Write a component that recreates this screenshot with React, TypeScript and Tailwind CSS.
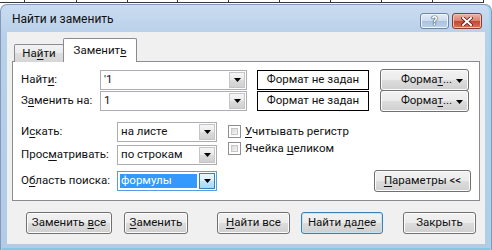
import React from "react";

const U = ({ children }: { children: React.ReactNode }) => (
  <span className="underline underline-offset-[2px] decoration-[1px]">{children}</span>
);

function Arrow({ className = "" }: { className?: string }) {
  return (
    <svg width="7" height="4" viewBox="0 0 7 4" className={className}>
      <path d="M0 0H7L3.5 4Z" fill="#000" />
    </svg>
  );
}

function Combo({
  value,
  w,
  focused = false,
}: {
  value: React.ReactNode;
  w: string;
  focused?: boolean;
}) {
  return (
    <div className={`h-[20px] ${w} flex border ${focused ? "border-[#569de5]" : "border-[#abadb3]"} bg-white`}>
      <div className="flex-1 flex items-stretch p-[2px] min-w-0">
        {focused ? (
          <div className="flex-1 bg-[#3399ff] text-white flex items-center pl-px leading-none">
            <span>{value}</span>
          </div>
        ) : (
          <div className="flex-1 flex items-center pl-[1px] leading-none">
            <span>{value}</span>
          </div>
        )}
      </div>
      <div
        className={`w-[16px] my-px mr-px flex items-center justify-center border ${
          focused
            ? "border-[#3c7fb1] bg-[linear-gradient(#eaf6fd,#d9f0fc_50%,#bee6fd_50%,#a7d9f5)]"
            : "border-[#c5c5c5] bg-[linear-gradient(#f6f6f6,#e9e9e9_50%,#dcdcdc_50%,#d0d0d0)]"
        }`}
      >
        <Arrow />
      </div>
    </div>
  );
}

function Btn({
  children,
  className = "",
  def = false,
}: {
  children: React.ReactNode;
  className?: string;
  def?: boolean;
}) {
  return (
    <div
      className={`h-[22px] flex items-center justify-center rounded-[3px] border leading-none ${
        def
          ? "border-[#3c7fb1] shadow-[inset_0_0_0_1px_#c4e5f6] bg-[linear-gradient(#f2f2f2,#ebebeb_50%,#dddddd_50%,#cfcfcf)]"
          : "border-[#707070] shadow-[inset_0_0_0_1px_#fcfcfc] bg-[linear-gradient(#f2f2f2,#ebebeb_50%,#dddddd_50%,#cfcfcf)]"
      } ${className}`}
    >
      <span className="whitespace-pre">{children}</span>
    </div>
  );
}

function Check({ children }: { children: React.ReactNode }) {
  return (
    <div className="h-[17px] flex items-center">
      <div className="w-[13px] h-[13px] border border-[#8e8f8f] bg-white p-[2px]">
        <div className="w-full h-full border border-[#c6c6c6] bg-[linear-gradient(135deg,#dadada,#f5f5f5)]" />
      </div>
      <span className="ml-[4px] leading-none">{children}</span>
    </div>
  );
}

function FormatBtn() {
  return (
    <div className="ml-[11px] w-[89px] h-[22px] relative flex items-center justify-center rounded-[3px] border border-[#707070] shadow-[inset_0_0_0_1px_#fcfcfc] bg-[linear-gradient(#f2f2f2,#ebebeb_50%,#dddddd_50%,#cfcfcf)] leading-none">
      <span className="ml-[4px]">
        Форма<U>т</U>...
      </span>
      <Arrow className="absolute right-[5px] top-[9px]" />
    </div>
  );
}

export default function App() {
  const cells = [25, 52, 51, 50, 51, 51, 51, 51, 51, 51];
  return (
    <div className="w-[492px] h-[250px] bg-white overflow-hidden text-[11.5px] text-[#111] font-['Roboto',sans-serif]">
      {/* spreadsheet behind */}
      <div className="h-[4px] flex">
        {cells.map((c, i) => (
          <div key={i} style={{ width: c }} className="h-[3px] shrink-0 border-r border-b border-[#3a3a3a]" />
        ))}
      </div>

      {/* window */}
      <div className="h-[246px] rounded-t-[7px] border border-b-0 border-[#7f9aba] bg-[linear-gradient(#cadcf0,#b9d0e9_30px,#b4cbe6)] flex flex-col shadow-[inset_-2px_0_0_#9fd8ee]">
        {/* title bar */}
        <div className="h-[27px] flex items-start">
          <div className="pl-[11px] pt-[8px] leading-none text-[12px] text-[#111]">Найти и заменить</div>
          <div className="flex-1" />
          <div className="mt-[8px] w-[29px] h-[16px] rounded-[3px] border border-[#6f86a2] bg-[linear-gradient(#e4edf7,#cbdaec_50%,#aac2de_50%,#bcd2ea)] shadow-[inset_0_0_0_1px_#eef4fb] flex items-center justify-center">
            <span className="font-bold text-[12px] leading-none text-white [text-shadow:0_0_1px_#33465c,0_0_1px_#33465c,0_0_1px_#33465c]">?</span>
          </div>
          <div className="mt-[8px] ml-[3px] mr-[9px] w-[30px] h-[16px] rounded-[3px] border border-[#8a3b33] bg-[linear-gradient(#eab3a7,#d9826f_50%,#c4452f_50%,#d8735a)] shadow-[inset_0_0_0_1px_#f1c2b6] flex items-center justify-center">
            <svg width="12" height="9" viewBox="0 0 12 9">
              <path d="M2 1L10 8M10 1L2 8" stroke="#5a1d16" strokeWidth="3.6" strokeLinecap="square" />
              <path d="M2 1L10 8M10 1L2 8" stroke="#fff" strokeWidth="2" strokeLinecap="square" />
            </svg>
          </div>
        </div>

        {/* client area */}
        <div className="ml-[6px] mr-[6px] h-[212px] bg-[#f0f0f0] pl-[5px] pr-[5px] pt-[7px]">
          {/* tabs */}
          <div className="flex items-end ml-[2px] h-[23px] -mb-px relative">
            <div className="w-[50px] h-[18px] border border-b-0 border-[#898c95] rounded-t-[2px] bg-[linear-gradient(#f3f3f3,#ebebeb_50%,#dedede_50%,#d6d6d6)] flex items-center justify-center leading-none">
              <span>
                На<U>й</U>ти
              </span>
            </div>
            <div className="w-[74px] h-[24px] -ml-px border border-b-0 border-[#898c95] rounded-t-[2px] bg-white flex items-start justify-center pt-[6px] leading-none relative z-10">
              <span>
                Заменит<U>ь</U>
              </span>
            </div>
          </div>

          {/* panel */}
          <div className="h-[140px] border border-[#898c95] bg-white flex flex-col pl-[8px] pr-[8px] pt-[8px]">
            {/* row 1 */}
            <div className="flex items-center h-[20px]">
              <div className="w-[79px] leading-none">
                Найт<U>и</U>:
              </div>
              <Combo w="w-[147px]" value="'1" />
              <div className="ml-[10px] w-[112px] h-[20px] border border-black bg-white flex items-center justify-center leading-none">
                <span>Формат не задан</span>
              </div>
              <FormatBtn />
            </div>
            {/* row 2 */}
            <div className="flex items-center h-[20px] mt-[1px]">
              <div className="w-[79px] leading-none">
                З<U>а</U>менить на:
              </div>
              <Combo w="w-[147px]" value="1" />
              <div className="ml-[10px] w-[112px] h-[20px] border border-black bg-white flex items-center justify-center leading-none">
                <span>Формат не задан</span>
              </div>
              <FormatBtn />
            </div>

            {/* section 2 */}
            <div className="flex mt-[11px]">
              <div className="flex flex-col">
                <div className="flex items-center h-[20px]">
                  <div className="w-[96px] leading-none">
                    И<U>с</U>кать:
                  </div>
                  <Combo w="w-[100px]" value="на листе" />
                </div>
                <div className="flex items-center h-[20px] mt-[3px]">
                  <div className="w-[96px] leading-none">
                    Прос<U>м</U>атривать:
                  </div>
                  <Combo w="w-[100px]" value="по строкам" />
                </div>
                <div className="flex items-center h-[20px] mt-[6px]">
                  <div className="w-[96px] leading-none">
                    О<U>б</U>ласть поиска:
                  </div>
                  <Combo w="w-[100px]" value="формулы" focused />
                </div>
              </div>
              <div className="ml-[11px] flex flex-col mt-[1px]">
                <Check>
                  <U>У</U>читывать регистр
                </Check>
                <Check>
                  Ячейка <U>ц</U>еликом
                </Check>
              </div>
              <div className="flex-1" />
              <Btn className="w-[97px] self-end -mb-[1px]">
                <U>П</U>араметры &lt;&lt;
              </Btn>
            </div>
          </div>

          {/* bottom buttons */}
          <div className="flex mt-[11px] -ml-[5px]">
            <Btn className="ml-[19px] w-[86px]">
              Заменить <U>в</U>се
            </Btn>
            <Btn className="ml-[12px] w-[64px]">
              <U>З</U>аменить
            </Btn>
            <Btn className="ml-[29px] w-[73px]">
              <U>Н</U>айти все
            </Btn>
            <Btn className="ml-[11px] w-[82px]" def>
              Найти да<U>л</U>ее
            </Btn>
            <Btn className="ml-[20px] w-[73px]">Закрыть</Btn>
          </div>
        </div>
        <div className="flex-1 border-b-2 border-[#7fcbe6] mx-[1px]" />
      </div>
    </div>
  );
}
